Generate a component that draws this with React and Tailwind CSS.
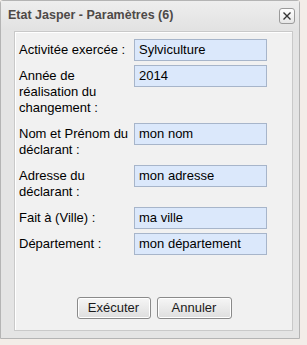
import React from "react";

const rows = [
  { label: ["Activitée exercée :"], value: "Sylviculture" },
  { label: ["Année de", "réalisation du", "changement :"], value: "2014" },
  { label: ["Nom et Prénom du", "déclarant :"], value: "mon nom" },
  { label: ["Adresse du", "déclarant :"], value: "mon adresse" },
  { label: ["Fait à (Ville) :"], value: "ma ville" },
  { label: ["Département :"], value: "mon département" },
];

export default function App() {
  return (
    <div
      className="w-[307px] h-[345px] bg-[#f3ede8] overflow-hidden"
      style={{ fontFamily: "'Liberation Sans', Arial, sans-serif" }}
    >
      <div className="w-[300px] h-[339px] border border-[#b4b4b4] rounded-tl-[3px] rounded-tr-[3px] bg-[#e4e4e4] flex flex-col">
        <div className="h-[29px] shrink-0 flex items-center justify-between pl-[7px] pr-[4px] bg-gradient-to-b from-[#eeeeee] to-[#e2e2e2]">
          <span className="text-[12.5px] font-bold text-[#4e4a48]">
            Etat Jasper - Paramètres (6)
          </span>
          <div className="w-[16px] h-[16px] rounded-[3px] border border-[#9a9a9a] bg-gradient-to-b from-white to-[#e6e6e6] flex items-center justify-center">
            <svg width="10" height="10" viewBox="0 0 10 10">
              <path d="M1.5 1.5 L8.5 8.5 M8.5 1.5 L1.5 8.5" stroke="#333" strokeWidth="1.4" />
            </svg>
          </div>
        </div>
        <div className="ml-[13px] mt-[1px] w-[279px] h-[300px] border border-[#c9c9c9] bg-[#f1f1f1] shadow-[inset_1px_1px_0_#ffffff] flex flex-col">
          <div className="pt-[7px] pl-[4px] flex flex-col gap-[4px]">
            {rows.map((r, i) => (
              <div key={i} className="flex">
                <div className="w-[115px] py-[3px] text-[13px] leading-[16px] text-black">
                  {r.label.map((l, j) => (
                    <div key={j} className="whitespace-nowrap">{l}</div>
                  ))}
                </div>
                <div className="w-[133px] h-[22px] border border-[#a7b5ca] bg-[#dbe8fb] pl-[4px] text-[13px] leading-[20px] text-black whitespace-nowrap">
                  {r.value}
                </div>
              </div>
            ))}
          </div>
          <div className="mt-auto mb-[11px] flex justify-center gap-[6px] pl-[1px]">
            <button className="w-[74px] h-[22px] rounded-[3px] border border-[#8a8a8a] bg-gradient-to-b from-[#f6f6f6] to-[#dedede] shadow-[inset_0_0_0_1px_#ffffff] text-[13px] text-[#1a1a1a]">
              Exécuter
            </button>
            <button className="w-[75px] h-[22px] rounded-[3px] border border-[#8a8a8a] bg-gradient-to-b from-[#f6f6f6] to-[#dedede] shadow-[inset_0_0_0_1px_#ffffff] text-[13px] text-[#1a1a1a]">
              Annuler
            </button>
          </div>
        </div>
      </div>
    </div>
  );
}
